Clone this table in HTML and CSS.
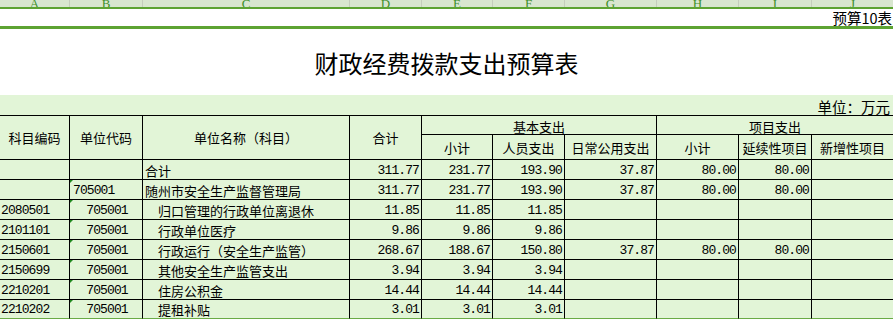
FILE: index.html
```html
<!DOCTYPE html>
<html lang="zh-CN">
<head>
<meta charset="utf-8">
<title>财政经费拨款支出预算表</title>
<link rel="stylesheet" href="styles.css">
</head>
<body>
<div class="colbar">
  <div class="cl"><span>A</span></div>
  <div class="cl"><span>B</span></div>
  <div class="cl"><span>C</span></div>
  <div class="cl"><span>D</span></div>
  <div class="cl"><span>E</span></div>
  <div class="cl"><span>F</span></div>
  <div class="cl"><span>G</span></div>
  <div class="cl"><span>H</span></div>
  <div class="cl"><span>I</span></div>
  <div class="cl last"><span>J</span></div>
</div>
<div class="gline thin"></div>
<div class="formno">预算10表</div>
<div class="gline thick"></div>
<div class="titlebox"><h1 class="title">财政经费拨款支出预算表</h1></div>

<div class="sheet">
  <div class="unit">单位：万元</div>

  <div class="c h span2 ca">科目编码</div>
  <div class="c h span2 cb">单位代码</div>
  <div class="c h span2 cc">单位名称（科目）</div>
  <div class="c h span2 cd">合计</div>
  <div class="c h grp1 top">基本支出</div>
  <div class="c h grp2 top nr">项目支出</div>
  <div class="c h sub">小计</div>
  <div class="c h sub">人员支出</div>
  <div class="c h sub">日常公用支出</div>
  <div class="c h sub">小计</div>
  <div class="c h sub">延续性项目</div>
  <div class="c h sub nr">新增性项目</div>

  <!-- row: 合计 -->
  <div class="c"></div>
  <div class="c"></div>
  <div class="c t">合计</div>
  <div class="c n">311.77</div>
  <div class="c n">231.77</div>
  <div class="c n">193.90</div>
  <div class="c n">37.87</div>
  <div class="c n">80.00</div>
  <div class="c n">80.00</div>
  <div class="c nr"></div>

  <!-- row: 705001 -->
  <div class="c"></div>
  <div class="c code mark">705001</div>
  <div class="c t">随州市安全生产监督管理局</div>
  <div class="c n">311.77</div>
  <div class="c n">231.77</div>
  <div class="c n">193.90</div>
  <div class="c n">37.87</div>
  <div class="c n">80.00</div>
  <div class="c n">80.00</div>
  <div class="c nr"></div>

  <div class="c code">2080501</div>
  <div class="c code ctr mark">705001</div>
  <div class="c t ind">归口管理的行政单位离退休</div>
  <div class="c n">11.85</div>
  <div class="c n">11.85</div>
  <div class="c n">11.85</div>
  <div class="c"></div>
  <div class="c"></div>
  <div class="c"></div>
  <div class="c nr"></div>

  <div class="c code">2101101</div>
  <div class="c code ctr mark">705001</div>
  <div class="c t ind">行政单位医疗</div>
  <div class="c n">9.86</div>
  <div class="c n">9.86</div>
  <div class="c n">9.86</div>
  <div class="c"></div>
  <div class="c"></div>
  <div class="c"></div>
  <div class="c nr"></div>

  <div class="c code">2150601</div>
  <div class="c code ctr mark">705001</div>
  <div class="c t ind">行政运行（安全生产监管）</div>
  <div class="c n">268.67</div>
  <div class="c n">188.67</div>
  <div class="c n">150.80</div>
  <div class="c n">37.87</div>
  <div class="c n">80.00</div>
  <div class="c n">80.00</div>
  <div class="c nr"></div>

  <div class="c code">2150699</div>
  <div class="c code ctr mark">705001</div>
  <div class="c t ind">其他安全生产监管支出</div>
  <div class="c n">3.94</div>
  <div class="c n">3.94</div>
  <div class="c n">3.94</div>
  <div class="c"></div>
  <div class="c"></div>
  <div class="c"></div>
  <div class="c nr"></div>

  <div class="c code">2210201</div>
  <div class="c code ctr mark">705001</div>
  <div class="c t ind">住房公积金</div>
  <div class="c n">14.44</div>
  <div class="c n">14.44</div>
  <div class="c n">14.44</div>
  <div class="c"></div>
  <div class="c"></div>
  <div class="c"></div>
  <div class="c nr"></div>

  <div class="c code lr">2210202</div>
  <div class="c code ctr mark lr">705001</div>
  <div class="c t ind lr">提租补贴</div>
  <div class="c n lr">3.01</div>
  <div class="c n lr">3.01</div>
  <div class="c n lr">3.01</div>
  <div class="c lr"></div>
  <div class="c lr"></div>
  <div class="c lr"></div>
  <div class="c nr lr"></div>
</div>
</body>
</html>
```
FILE: styles.css
```css
html, body {
  margin: 0;
  padding: 0;
  background: #ffffff;
  overflow: hidden;
}
body {
  width: 893px;
  height: 319px;
  font-family: "Noto Sans CJK SC", sans-serif;
  color: #000;
}

/* column letter bar */
.colbar {
  display: grid;
  grid-template-columns: 70px 73px 207px 72px 71px 72px 92px 82px 73px 81px;
  height: 7px;
  overflow: hidden;
  background: #d8e6cf;
}
.cl {
  box-sizing: border-box;
  border-right: 1px solid #c4cdbc;
  display: flex;
  justify-content: center;
  align-items: flex-end;
  overflow: hidden;
}
.cl.last { border-right: none; }
.cl span {
  font-family: "Liberation Serif", serif;
  font-size: 13px;
  line-height: 13px;
  color: #3d8f2a;
  margin-bottom: -3px;
}

.gline { background: #5da332; }
.gline.thin { height: 2px; }
.gline.thick { height: 3px; }

.formno {
  height: 17px;
  display: flex;
  justify-content: flex-end;
  align-items: flex-end;
  font-size: 14.5px;
  line-height: 17px;
  padding-right: 1px;
  box-sizing: border-box;
}

.titlebox {
  height: 66px;
  display: flex;
  justify-content: center;
  align-items: flex-start;
}
.title {
  margin: 20px 0 0 0;
  font-size: 24px;
  font-weight: normal;
  line-height: 28px;
}

/* sheet grid */
.sheet {
  display: grid;
  grid-template-columns: 70px 73px 207px 72px 71px 72px 92px 82px 73px 81px;
  grid-template-rows: 21px 19px 25px repeat(7, 20px) 19px;
  background: #e2f5d7;
  font-size: 13px;
}
.unit {
  grid-column: 1 / -1;
  border-bottom: 1px solid #000;
  display: flex;
  justify-content: flex-end;
  align-items: flex-end;
  font-size: 14.5px;
  line-height: 16px;
  padding-right: 3px;
  padding-bottom: 0px;
}
.c {
  box-sizing: border-box;
  border-right: 1px solid #000;
  border-bottom: 1px solid #000;
  display: flex;
  align-items: center;
  padding-top: 2px;
  line-height: 16px;
  white-space: nowrap;
  overflow: hidden;
  position: relative;
}
.c.nr { border-right: none; }
.c.lr { border-bottom-color: #6aab46; }

.h { justify-content: center; padding-top: 0; }
.span2 { grid-row: span 2; padding-top: 1px; }
.grp1 { grid-column: 5 / 8; }
.grp2 { grid-column: 8 / 11; }
.top { padding-top: 4px; }
.sub { padding-top: 1px; }

.t { padding-left: 2px; }
.t.ind { padding-left: 15px; }

.n, .code {
  font-family: "Liberation Mono", monospace;
  font-size: 13px;
  letter-spacing: -0.9px;
}
.n { justify-content: flex-end; padding-right: 2px; }
.code { padding-left: 1px; }
.code.mark { padding-left: 3px; }
.code.ctr { justify-content: center; padding-left: 2px; }

.mark::before {
  content: "";
  position: absolute;
  left: -1px;
  top: 0;
  border-top: 4px solid #1e8a1e;
  border-right: 4px solid transparent;
}
```
